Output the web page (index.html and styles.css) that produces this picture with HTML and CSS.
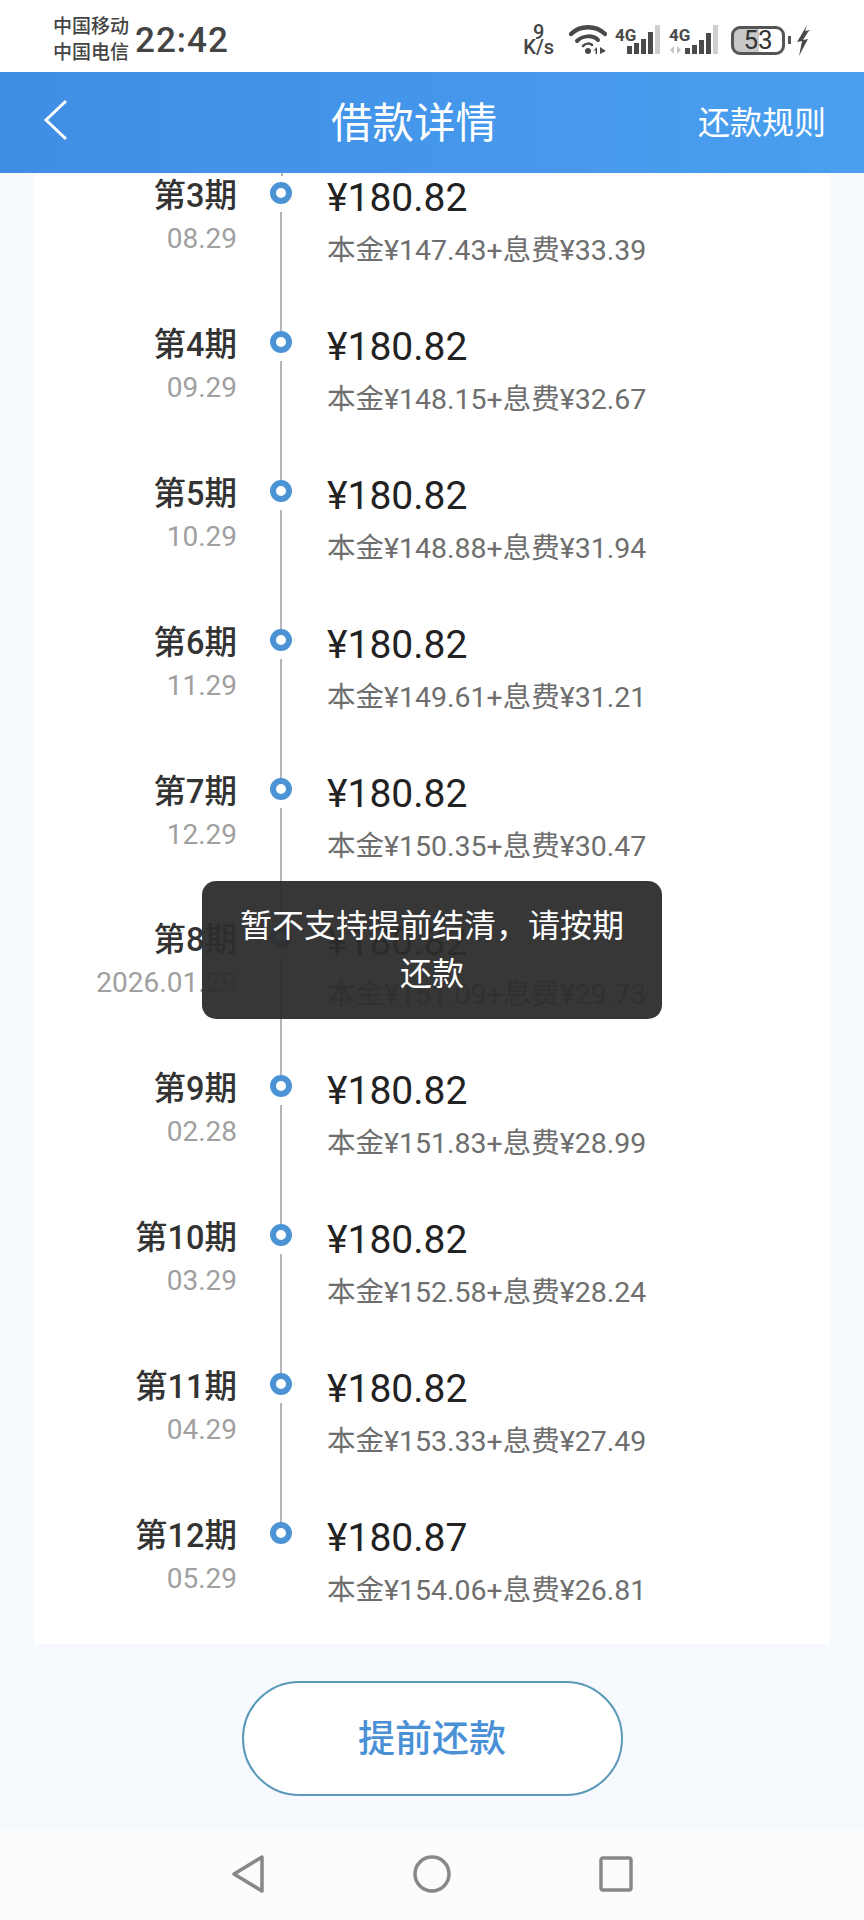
FILE: index.html
```html
<!DOCTYPE html>
<html lang="zh-CN">
<head>
  <meta charset="UTF-8">
  <meta name="viewport" content="width=device-width, initial-scale=1.0">
  <title>借款详情</title>
  <link rel="stylesheet" href="styles.css">
</head>
<body>
<div class="page">

  <div class="status-bar">
    <div class="carriers">
      <span>中国移动</span>
      <span>中国电信</span>
    </div>
    <div class="clock">22:42</div>
    <div class="status-icons">
      <div class="speed"><span>9</span><span>K/s</span></div>
      <svg class="wifi" width="38" height="30" viewBox="0 0 38 30">
        <path d="M2 9C11 0 27 0 36 9" fill="none" stroke="#4a4a4a" stroke-width="4.5" stroke-linecap="round"/>
        <path d="M8 16C14 10 24 10 29 15" fill="none" stroke="#4a4a4a" stroke-width="4" stroke-linecap="round"/>
        <path d="M14 21C17 18 21 18 23 20" fill="none" stroke="#4a4a4a" stroke-width="2.5" stroke-linecap="round"/>
        <circle cx="19" cy="26" r="3" fill="#4a4a4a"/>
        <path d="M28 22v7h-1.5v-4l-2.5 1zM31 22l6 4-6 3z" fill="#4a4a4a"/>
      </svg>
      <svg class="signal" width="46" height="30" viewBox="0 0 46 30">
        <text x="0" y="16" class="sig-text">4G</text>
        <rect x="12" y="21" width="5" height="8" fill="#4a4a4a"/>
        <rect x="19" y="18" width="5" height="11" fill="#4a4a4a"/>
        <rect x="26" y="14" width="5" height="15" fill="#4a4a4a"/>
        <rect x="33" y="7" width="5" height="22" fill="#4a4a4a"/>
        <rect x="40" y="0" width="5" height="29" fill="#cfcfcf"/>
      </svg>
      <svg class="signal" width="49" height="30" viewBox="0 0 49 30">
        <text x="0" y="16" class="sig-text">4G</text>
        <path d="M5 21v8l-4-4zM8 21v8l4-4z" fill="#c4c4c4"/>
        <rect x="16" y="23" width="5" height="6" fill="#4a4a4a"/>
        <rect x="23" y="20" width="5" height="9" fill="#4a4a4a"/>
        <rect x="30" y="15" width="5" height="14" fill="#4a4a4a"/>
        <rect x="37" y="8" width="5" height="21" fill="#4a4a4a"/>
        <rect x="44" y="0" width="5" height="29" fill="#cfcfcf"/>
      </svg>
      <div class="battery">53</div>
      <div class="battery-nib"></div>
      <svg class="bolt" width="13" height="31" viewBox="0 0 13 31">
        <path d="M10 0L3 12l-3 5 5-1-3 15 9-17-5 1 5-8 2-2-5 1z" fill="#4a4a4a"/>
      </svg>
    </div>
  </div>

  <div class="header">
    <svg class="back" width="26" height="42" viewBox="0 0 26 42">
      <path d="M23 2L3 21l20 19" fill="none" stroke="#fff" stroke-width="3"/>
    </svg>
    <div class="title">借款详情</div>
    <div class="rules">还款规则</div>
  </div>

  <div class="content">
    <div class="card">
      <div class="stub"></div>

      <div class="row">
        <div class="when"><div class="term">第3期</div><div class="date">08.29</div></div>
        <div class="track"><div class="dot"></div><div class="line"></div></div>
        <div class="money"><div class="amount">¥180.82</div><div class="split">本金¥147.43+息费¥33.39</div></div>
      </div>
      <div class="row">
        <div class="when"><div class="term">第4期</div><div class="date">09.29</div></div>
        <div class="track"><div class="dot"></div><div class="line"></div></div>
        <div class="money"><div class="amount">¥180.82</div><div class="split">本金¥148.15+息费¥32.67</div></div>
      </div>
      <div class="row">
        <div class="when"><div class="term">第5期</div><div class="date">10.29</div></div>
        <div class="track"><div class="dot"></div><div class="line"></div></div>
        <div class="money"><div class="amount">¥180.82</div><div class="split">本金¥148.88+息费¥31.94</div></div>
      </div>
      <div class="row">
        <div class="when"><div class="term">第6期</div><div class="date">11.29</div></div>
        <div class="track"><div class="dot"></div><div class="line"></div></div>
        <div class="money"><div class="amount">¥180.82</div><div class="split">本金¥149.61+息费¥31.21</div></div>
      </div>
      <div class="row">
        <div class="when"><div class="term">第7期</div><div class="date">12.29</div></div>
        <div class="track"><div class="dot"></div><div class="line"></div></div>
        <div class="money"><div class="amount">¥180.82</div><div class="split">本金¥150.35+息费¥30.47</div></div>
      </div>
      <div class="row">
        <div class="when"><div class="term">第8期</div><div class="date">2026.01.29</div></div>
        <div class="track"><div class="dot"></div><div class="line"></div></div>
        <div class="money"><div class="amount">¥180.82</div><div class="split">本金¥151.09+息费¥29.73</div></div>
      </div>
      <div class="row">
        <div class="when"><div class="term">第9期</div><div class="date">02.28</div></div>
        <div class="track"><div class="dot"></div><div class="line"></div></div>
        <div class="money"><div class="amount">¥180.82</div><div class="split">本金¥151.83+息费¥28.99</div></div>
      </div>
      <div class="row">
        <div class="when"><div class="term">第10期</div><div class="date">03.29</div></div>
        <div class="track"><div class="dot"></div><div class="line"></div></div>
        <div class="money"><div class="amount">¥180.82</div><div class="split">本金¥152.58+息费¥28.24</div></div>
      </div>
      <div class="row">
        <div class="when"><div class="term">第11期</div><div class="date">04.29</div></div>
        <div class="track"><div class="dot"></div><div class="line"></div></div>
        <div class="money"><div class="amount">¥180.82</div><div class="split">本金¥153.33+息费¥27.49</div></div>
      </div>
      <div class="row row-last">
        <div class="when"><div class="term">第12期</div><div class="date">05.29</div></div>
        <div class="track"><div class="dot"></div></div>
        <div class="money"><div class="amount">¥180.87</div><div class="split">本金¥154.06+息费¥26.81</div></div>
      </div>
    </div>

    <button class="repay">提前还款</button>
  </div>

  <div class="nav-bar">
    <svg width="34" height="40" viewBox="0 0 34 40">
      <path d="M31 3L3 20l28 17z" fill="none" stroke="#888" stroke-width="3.5" stroke-linejoin="round"/>
    </svg>
    <svg width="38" height="38" viewBox="0 0 38 38">
      <circle cx="19" cy="19" r="17" fill="none" stroke="#888" stroke-width="3.5"/>
    </svg>
    <svg width="34" height="36" viewBox="0 0 34 36">
      <rect x="2" y="2" width="30" height="32" rx="2" fill="none" stroke="#888" stroke-width="3.5"/>
    </svg>
  </div>

  <div class="toast">暂不支持提前结清，请按期还款</div>
</div>
</body>
</html>
```

FILE: styles.css
```css
* {
  box-sizing: border-box;
}
body {
  margin: 0;
  font-family: Roboto, "Noto Sans CJK SC", sans-serif;
  background-color: #f6f9fd;
}
.page {
  position: relative;
  display: flex;
  flex-direction: column;
  height: 1920px;
  overflow: hidden;
}

/* status bar */
.status-bar {
  display: flex;
  align-items: center;
  height: 72px;
  padding: 8px 54px 0 53px;
  background-color: #fff;
  color: #444;
}
.carriers {
  display: flex;
  flex-direction: column;
  font-size: 19px;
  font-weight: 500;
  line-height: 26px;
}
.clock {
  margin-left: 6px;
  font-size: 35px;
  font-weight: 500;
  letter-spacing: 1px;
}
.status-icons {
  display: flex;
  align-items: center;
  margin-left: auto;
}
.speed {
  display: flex;
  flex-direction: column;
  align-items: center;
  font-size: 20px;
  font-weight: 500;
  line-height: 15px;
}
.wifi {
  margin-left: 15px;
}
.signal {
  margin-left: 8px;
}
.sig-text {
  font-size: 17px;
  font-weight: 700;
  fill: #4a4a4a;
}
.battery {
  width: 54px;
  height: 29px;
  margin-left: 13px;
  border: 3px solid #555;
  border-radius: 9px;
  background: linear-gradient(90deg, #c8c8c8 53%, #fff 53%);
  font-size: 26px;
  line-height: 23px;
  text-align: center;
  color: #333;
}
.battery-nib {
  width: 3px;
  height: 8px;
  margin-left: 3px;
  background-color: #555;
}
.bolt {
  margin-left: 6px;
}

/* header */
.header {
  display: flex;
  align-items: center;
  height: 101px;
  padding: 0 38px 6px 43px;
  background: linear-gradient(90deg, #3f8ee6, #4a9fef);
  color: #fff;
}
.title {
  margin-left: 262px;
  font-size: 41.5px;
}
.rules {
  margin-left: auto;
  font-size: 32px;
}

/* repayment list */
.content {
  flex: 1;
  min-height: 0;
}
.card {
  margin: 0 34px;
  background-color: #fff;
}
.stub {
  width: 2px;
  height: 3px;
  margin-left: 247px;
  background-color: #b5b5b5;
}
.row {
  display: grid;
  grid-template-columns: 203px 90px 1fr;
  height: 148.9px;
}
.row-last {
  height: 128px;
}
.when {
  text-align: right;
}
.term {
  font-size: 32.5px;
  font-weight: 500;
  line-height: 40px;
  color: #333;
}
.date {
  margin-top: 5px;
  font-size: 28px;
  line-height: 36px;
  color: #a0a0a0;
}
.track {
  display: flex;
  flex-direction: column;
  align-items: center;
  padding: 6px 2px 0 0;
}
.dot {
  flex: none;
  width: 22px;
  height: 22px;
  border: 6px solid #4c93d6;
  border-radius: 50%;
}
.line {
  flex: 1;
  width: 2px;
  margin: 8px 0 -7px;
  background-color: #b5b5b5;
}
.amount {
  font-size: 39px;
  line-height: 44px;
  color: #222;
}
.split {
  margin-top: 12px;
  font-size: 28.5px;
  line-height: 38px;
  color: #6e6e6e;
}

/* button */
.repay {
  display: block;
  width: 381px;
  height: 115px;
  margin: 37px auto 0;
  padding-bottom: 6px;
  border: 2px solid #5a9ab8;
  border-radius: 58px;
  background-color: #fff;
  font-family: inherit;
  font-size: 37px;
  font-weight: 500;
  color: #4a90d6;
}

/* bottom navigation */
.nav-bar {
  display: flex;
  align-items: center;
  justify-content: center;
  gap: 148px;
  height: 90px;
  padding-bottom: 2px;
  background-color: #fbfcfd;
}

/* toast, over the list */
.toast {
  position: absolute;
  left: 202px;
  top: 881px;
  width: 460px;
  padding: 21px 30px;
  border-radius: 14px;
  background-color: rgba(44, 44, 44, 0.95);
  font-size: 32px;
  line-height: 48px;
  text-align: center;
  color: #fff;
}
```
